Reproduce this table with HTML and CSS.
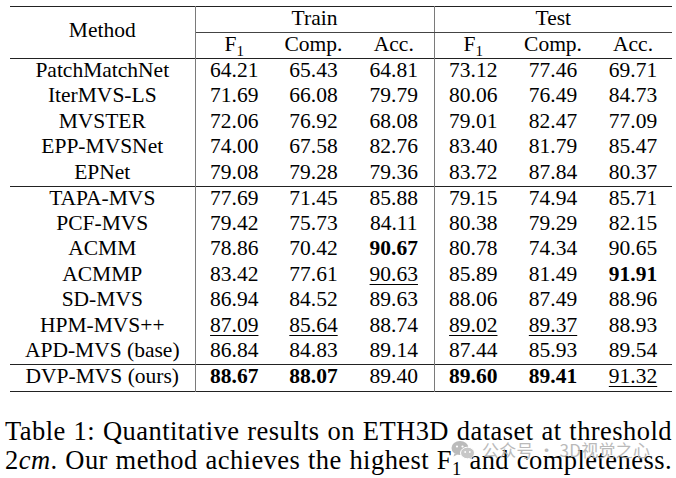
FILE: index.html
```html
<!DOCTYPE html>
<html>
<head>
<meta charset="utf-8">
<link rel="stylesheet" href="styles.css">
</head>
<body>
<div class="page">
<table class="results">
<colgroup>
<col class="c-method"><col class="c-a"><col class="c-b"><col class="c-c"><col class="c-d"><col class="c-e"><col class="c-f">
</colgroup>
<thead>
<tr class="hrow1"><th rowspan="2" class="method vr">Method</th><th colspan="3" class="grp vr">Train</th><th colspan="3" class="grp">Test</th></tr>
<tr class="hrow2"><th>F<sub>1</sub></th><th>Comp.</th><th class="vr">Acc.</th><th>F<sub>1</sub></th><th>Comp.</th><th>Acc.</th></tr>
</thead>
<tbody class="grp1">
<tr><td class="vr">PatchMatchNet</td><td>64.21</td><td>65.43</td><td class="vr">64.81</td><td>73.12</td><td>77.46</td><td>69.71</td></tr>
<tr><td class="vr">IterMVS-LS</td><td>71.69</td><td>66.08</td><td class="vr">79.79</td><td>80.06</td><td>76.49</td><td>84.73</td></tr>
<tr><td class="vr">MVSTER</td><td>72.06</td><td>76.92</td><td class="vr">68.08</td><td>79.01</td><td>82.47</td><td>77.09</td></tr>
<tr><td class="vr">EPP-MVSNet</td><td>74.00</td><td>67.58</td><td class="vr">82.76</td><td>83.40</td><td>81.79</td><td>85.47</td></tr>
<tr><td class="vr">EPNet</td><td>79.08</td><td>79.28</td><td class="vr">79.36</td><td>83.72</td><td>87.84</td><td>80.37</td></tr>
</tbody>
<tbody class="grp2">
<tr><td class="vr">TAPA-MVS</td><td>77.69</td><td>71.45</td><td class="vr">85.88</td><td>79.15</td><td>74.94</td><td>85.71</td></tr>
<tr><td class="vr">PCF-MVS</td><td>79.42</td><td>75.73</td><td class="vr">84.11</td><td>80.38</td><td>79.29</td><td>82.15</td></tr>
<tr><td class="vr">ACMM</td><td>78.86</td><td>70.42</td><td class="vr"><b>90.67</b></td><td>80.78</td><td>74.34</td><td>90.65</td></tr>
<tr><td class="vr">ACMMP</td><td>83.42</td><td>77.61</td><td class="vr"><u>90.63</u></td><td>85.89</td><td>81.49</td><td><b>91.91</b></td></tr>
<tr><td class="vr">SD-MVS</td><td>86.94</td><td>84.52</td><td class="vr">89.63</td><td>88.06</td><td>87.49</td><td>88.96</td></tr>
<tr><td class="vr">HPM-MVS++</td><td><u>87.09</u></td><td><u>85.64</u></td><td class="vr">88.74</td><td><u>89.02</u></td><td><u>89.37</u></td><td>88.93</td></tr>
<tr><td class="vr">APD-MVS (base)</td><td>86.84</td><td>84.83</td><td class="vr">89.14</td><td>87.44</td><td>85.93</td><td>89.54</td></tr>
</tbody>
<tbody class="grp3">
<tr><td class="vr">DVP-MVS (ours)</td><td><b>88.67</b></td><td><b>88.07</b></td><td class="vr">89.40</td><td><b>89.60</b></td><td><b>89.41</b></td><td><u>91.32</u></td></tr>
</tbody>
</table>
<div class="caption-wrap">
<p class="caption">Table 1: Quantitative results on ETH3D dataset at threshold 2<i>cm</i>. Our method achieves the highest F<sub>1</sub> and completeness.</p>
<div class="watermark">
<svg class="wm-icon" viewBox="0 0 24 20" width="24" height="20">
<ellipse cx="9" cy="8" rx="8.5" ry="7" fill="#b4b4b4"/>
<path d="M3.5 13.5 L2.5 16.5 L6.5 14.5 Z" fill="#b4b4b4"/>
<circle cx="6" cy="6.5" r="1.1" fill="#fff"/>
<circle cx="11.5" cy="6.5" r="1.1" fill="#fff"/>
<ellipse cx="16.5" cy="13" rx="7" ry="5.8" fill="#c2c2c2" stroke="#fff" stroke-width="1"/>
<path d="M20.5 17 L21.5 19.5 L18 18 Z" fill="#c2c2c2"/>
<circle cx="14.2" cy="12" r="0.9" fill="#fff"/>
<circle cx="18.8" cy="12" r="0.9" fill="#fff"/>
</svg>
<span class="wm-text">公众号 · 3D视觉之心</span>
</div>
</div>
</div>
</body>
</html>
```
FILE: styles.css
```css
html, body {
  margin: 0;
  padding: 0;
  background: #fff;
}
.page {
  width: 676px;
  height: 478px;
  font-family: "Liberation Serif", "Times New Roman", serif;
  color: #000;
  overflow: hidden;
}
.results {
  border-collapse: collapse;
  table-layout: fixed;
  width: 662px;
  margin: 6px 0 0 10px;
  font-size: 21.5px;
  border-top: 1px solid #222;
  border-bottom: 1px solid #222;
}
.c-method { width: 185px; }
.c-a { width: 78px; }
.c-b { width: 81px; }
.c-c { width: 80px; }
.c-d { width: 78px; }
.c-e { width: 82px; }
.c-f { width: 78px; }
.results th, .results td {
  padding: 0;
  text-align: center;
  font-weight: normal;
  line-height: 22px;
  white-space: nowrap;
}
.results td { vertical-align: top; }
.results .vr { border-right: 1px solid #7a7a7a; }
.hrow1 { height: 26px; }
.hrow2 { height: 26px; }
.hrow1 th.grp {
  border-bottom: 1px solid #444;
  vertical-align: top;
  padding-top: 0;
}
.hrow1 th.method {
  vertical-align: middle;
  padding-bottom: 5px;
}
.hrow2 th { vertical-align: top; padding-top: 0; }
.results thead { border-bottom: 1px solid #222; }
.grp1 tr, .grp2 tr { height: 25.5px; }
.grp2 { border-top: 1px solid #222; border-bottom: 1px solid #222; }
.grp3 tr { height: 27px; }
.grp3 td { padding-top: 0; }
.results sub {
  font-size: 0.7em;
  vertical-align: -0.34em;
  line-height: 0;
}
.results b { font-weight: bold; }
.results u {
  text-decoration: underline;
  text-decoration-thickness: 1px;
  text-underline-offset: 3px;
}
.caption-wrap {
  position: relative;
  margin: 25px 4px 0 5px;
}
.caption {
  margin: 0;
  font-size: 26.5px;
  letter-spacing: 0.45px;
  line-height: 29px;
  text-align: justify;
  text-align-last: justify;
}
.caption i { font-style: italic; }
.caption sub {
  font-size: 0.7em;
  vertical-align: -0.3em;
  line-height: 0;
}
.watermark {
  position: absolute;
  left: 446px;
  top: 20px;
  display: flex;
  align-items: center;
  gap: 7px;
  opacity: 0.9;
}
.wm-text {
  font-family: "Noto Sans CJK SC", "Noto Sans", sans-serif;
  font-size: 17px;
  color: #b3b3b3;
  letter-spacing: 0.3px;
}
```
